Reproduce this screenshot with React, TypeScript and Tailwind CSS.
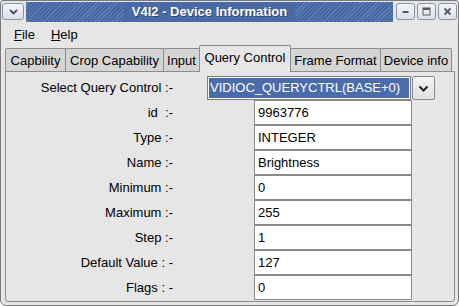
import React from 'react';

const tabs = [
  { label: 'Capbility', w: 'w-[61px]' },
  { label: 'Crop Capability', w: 'w-[99px]' },
  { label: 'Input', w: 'w-[37px]' },
  { label: 'Query Control', w: 'w-[92px]', active: true },
  { label: 'Frame Format', w: 'w-[91px]' },
  { label: 'Device info', w: 'w-[72px]' },
];

const fields = [
  { label: 'id  :-', value: '9963776' },
  { label: 'Type :-', value: 'INTEGER' },
  { label: 'Name :-', value: 'Brightness' },
  { label: 'Minimum :-', value: '0' },
  { label: 'Maximum :-', value: '255' },
  { label: 'Step :-', value: '1' },
  { label: 'Default Value : -', value: '127' },
  { label: 'Flags : -', value: '0' },
];

function TitleButton({ children }: { children: React.ReactNode }) {
  return (
    <div className="w-[19px] h-[17px] rounded-[3px] border border-[#8a93a3] bg-[linear-gradient(#f2f4f7,#dde1e8)] flex items-center justify-center">
      {children}
    </div>
  );
}

export default function App() {
  return (
    <div className="w-[459px] h-[306px] bg-[#e6e6e6] border border-[#7a7a7a] rounded-t-[3px] rounded-b-[6px] flex flex-col overflow-hidden font-['Liberation_Sans',Arial,sans-serif] text-[13px] text-black">
      {/* Title bar */}
      <div className="h-[21px] flex items-center px-[1px] gap-[2px]">
        <div className="w-[22px] h-[17px] rounded-[3px] border border-[#8a93a3] bg-[linear-gradient(#f2f4f7,#dde1e8)] flex items-center justify-center">
          <svg width="9" height="6" viewBox="0 0 9 6">
            <path d="M1 1 L4.5 4.5 L8 1" stroke="#4a4f58" strokeWidth="1.8" fill="none" />
          </svg>
        </div>
        <div className="flex-1 h-[20px] flex items-center justify-center bg-[repeating-linear-gradient(135deg,#4767a1_0px,#4767a1_2px,#5f7fb8_2px,#5f7fb8_3px)]">
          <span className="px-[8px] h-full flex items-center bg-[#4a6aa5] text-white font-bold [text-shadow:1px_1px_0_#2c4574]">
            V4l2 - Device Information
          </span>
        </div>
        <div className="flex gap-[2px] ml-[1px]">
          <TitleButton>
            <svg width="9" height="9" viewBox="0 0 9 9">
              <rect x="1.5" y="4" width="6" height="2" fill="#555a63" />
            </svg>
          </TitleButton>
          <TitleButton>
            <svg width="9" height="9" viewBox="0 0 9 9">
              <rect x="1" y="1" width="7" height="7" stroke="#555a63" strokeWidth="1" fill="none" />
              <rect x="1" y="1" width="7" height="2" fill="#555a63" />
            </svg>
          </TitleButton>
          <TitleButton>
            <svg width="9" height="9" viewBox="0 0 9 9">
              <path d="M1.5 1.5 L7.5 7.5 M7.5 1.5 L1.5 7.5" stroke="#555a63" strokeWidth="1.8" />
            </svg>
          </TitleButton>
        </div>
      </div>

      {/* Menu bar */}
      <div className="h-[23px] flex items-center gap-[16px] pl-[13px] pt-[2px]">
        <span><span className="underline">F</span>ile</span>
        <span><span className="underline">H</span>elp</span>
      </div>

      {/* Tabs */}
      <div className="h-[27px] flex items-end pl-[4px] -mb-px">
        {tabs.map((t, i) => (
          <div
            key={t.label}
            className={`${t.w} ${i > 0 ? '-ml-px' : ''} ${
              t.active
                ? 'h-[27px] bg-[#e6e6e6] relative z-10 pb-[2px]'
                : 'h-[24px] bg-[#d5d5d5] pt-px'
            } border border-b-0 border-[#8c8c8c] rounded-t-[2px] flex items-center justify-center whitespace-nowrap`}
          >
            {t.label}
          </div>
        ))}
      </div>

      {/* Panel */}
      <div className="flex-1 ml-[4px] mr-[3px] mb-[3px] border border-[#8c8c8c] rounded-b-[3px] pt-[4px] flex flex-col">
        <div className="h-[24px] flex items-center">
          <div className="w-[167px] text-right">Select Query Control :-</div>
          <div className="ml-[34px] w-[204px] h-[24px] border border-[#7f7f7f] bg-white p-[1px]">
            <div className="h-full bg-[#4a6cab] text-white flex items-center px-[1px] whitespace-nowrap">
              VIDIOC_QUERYCTRL(BASE+0)
            </div>
          </div>
          <div className="ml-px w-[23px] h-[24px] border border-[#8a8a8a] rounded-[2px] bg-[linear-gradient(#f4f4f4,#e0e0e0)] flex items-center justify-center">
            <svg width="11" height="7" viewBox="0 0 11 7">
              <path d="M1.5 1.5 L5.5 5.5 L9.5 1.5" stroke="#222" strokeWidth="2" fill="none" />
            </svg>
          </div>
        </div>
        {fields.map((f) => (
          <div key={f.label} className="h-[25px] flex items-center">
            <div className="w-[167px] text-right whitespace-pre">{f.label}</div>
            <div className="ml-[81px] w-[158px] h-[25px] border border-[#8a8a8a] bg-white flex items-center pl-[3px]">
              {f.value}
            </div>
          </div>
        ))}
      </div>
    </div>
  );
}
